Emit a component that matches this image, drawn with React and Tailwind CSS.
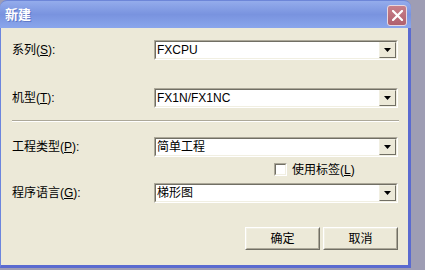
import React from "react";

const font = "font-['Liberation_Sans','Noto_Sans_CJK_SC',sans-serif]";

function Arrow() {
  return (
    <svg width="7" height="4" viewBox="0 0 7 4">
      <path d="M0 0H7L3.5 4Z" fill="#000" />
    </svg>
  );
}

function Combo({ text }) {
  return (
    <div className="w-[244px] h-[20px] border border-t-[#aca899] border-l-[#aca899] border-b-white border-r-white flex">
      <div className="flex-1 border border-t-[#716f64] border-l-[#716f64] border-b-[#f1efe2] border-r-[#f1efe2] bg-white flex items-center">
        <span className="flex-1 pl-[1px] text-[12px] text-black leading-none">{text}</span>
        <div className="w-[17px] h-[16px] bg-[#ece9d8] border border-t-[#f1efe2] border-l-[#f1efe2] border-b-[#716f64] border-r-[#716f64] flex items-center justify-center">
          <Arrow />
        </div>
      </div>
    </div>
  );
}

function Label({ main, k }) {
  return (
    <div className="w-[142px] text-[12px] text-black leading-none">
      {main}(<span className="underline">{k}</span>):
    </div>
  );
}

function Btn({ children }) {
  return (
    <div className="w-[75px] h-[23px] border border-t-white border-l-white border-b-[#716f64] border-r-[#716f64] flex">
      <div className="flex-1 border border-t-[#f1efe2] border-l-[#f1efe2] border-b-[#aca899] border-r-[#aca899] flex items-center justify-center text-[12px] text-black">
        {children}
      </div>
    </div>
  );
}

export default function App() {
  return (
    <div className={`w-[425px] h-[270px] bg-[#9e9db4] ${font}`}>
      <div className="w-[411px] h-[268px] flex flex-col">
        <div className="h-[28px] rounded-t-[7px] bg-gradient-to-b from-[#94acec] via-[#7993df] to-[#8aa6ec] border-t border-[#6d86d8] flex items-center justify-between pl-[5px] pr-[4px]">
          <span className="text-white font-bold text-[13px] [text-shadow:1px_1px_0_#6078c8]">新建</span>
          <div className="w-[20px] h-[21px] rounded-[3px] border border-[#e8d8e0] bg-gradient-to-b from-[#c8808a] to-[#b0606e] flex items-center justify-center mt-[2px]">
            <svg width="11" height="11" viewBox="0 0 11 11">
              <path d="M1 1L10 10M10 1L1 10" stroke="#fff" strokeWidth="2.2" strokeLinecap="square" />
            </svg>
          </div>
        </div>
        <div className="flex-1 bg-[#ece9d8] border-l border-l-[#6c85de] border-r-[3px] border-r-[#5a6ad0] border-b-[3px] border-b-[#5a6ad0] flex flex-col pl-[11px] pr-[9px] pt-[12px]">
          <div className="flex items-center">
            <Label main="系列" k="S" />
            <Combo text="FXCPU" />
          </div>
          <div className="flex items-center mt-[28px]">
            <Label main="机型" k="T" />
            <Combo text="FX1N/FX1NC" />
          </div>
          <div className="mt-[12px] h-[2px] border-t border-t-[#aca899] border-b border-b-white" />
          <div className="flex items-center mt-[15px]">
            <Label main="工程类型" k="P" />
            <Combo text="简单工程" />
          </div>
          <div className="flex items-center mt-[6px] h-[13px] pl-[262px]">
            <div className="w-[13px] h-[13px] border border-t-[#aca899] border-l-[#aca899] border-b-white border-r-white">
              <div className="w-full h-full bg-white border border-t-[#716f64] border-l-[#716f64] border-b-[#f1efe2] border-r-[#f1efe2]" />
            </div>
            <span className="ml-[5px] text-[12px] text-black leading-none">
              使用标签(<span className="underline">L</span>)
            </span>
          </div>
          <div className="flex items-center mt-[7px]">
            <Label main="程序语言" k="G" />
            <Combo text="梯形图" />
          </div>
          <div className="flex justify-end gap-[3px] mt-[24px] pr-[1px]">
            <Btn>确定</Btn>
            <Btn>取消</Btn>
          </div>
        </div>
      </div>
    </div>
  );
}
